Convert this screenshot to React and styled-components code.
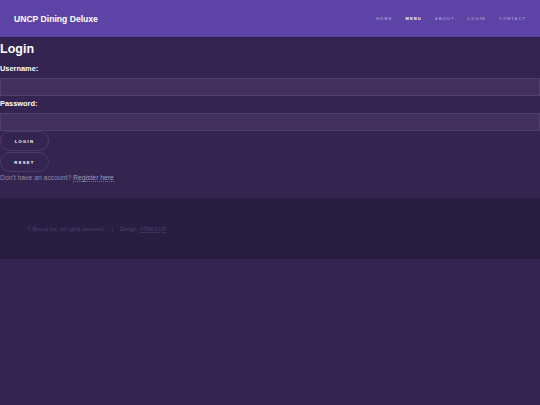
import React from "react";
import styled, { createGlobalStyle } from "styled-components";

const GlobalStyle = createGlobalStyle`
  html, body {
    margin: 0;
    padding: 0;
    background: #332550;
    font-family: "Liberation Sans", Arial, sans-serif;
  }
`;

const Header = styled.header`
  display: flex;
  align-items: center;
  justify-content: space-between;
  height: 37px;
  padding: 0 14px;
  background: #5d43a5;
  border-bottom: 1px solid #2c2046;
`;

const Title = styled.h1`
  margin: 0;
  font-size: 8.6px;
  font-weight: bold;
  color: #ffffff;
`;

const Nav = styled.nav`
  display: flex;
  gap: 13px;
`;

const NavLink = styled.a`
  font-size: 4px;
  font-weight: bold;
  letter-spacing: 0.28em;
  text-transform: uppercase;
  color: ${(props) => (props.$active ? "#ffffff" : "#a796d2")};
  text-decoration: none;
`;

const Main = styled.main`
  padding: 4px 0 17px;
  background: #332550;
`;

const Heading = styled.h2`
  margin: 0 0 8px;
  font-size: 12.5px;
  font-weight: bold;
  color: #ffffff;
`;

const Label = styled.label`
  display: block;
  margin-bottom: 5px;
  font-size: 7.4px;
  font-weight: bold;
  color: #ffffff;
`;

const Input = styled.input`
  display: block;
  box-sizing: border-box;
  width: 100%;
  height: 18px;
  margin: 0 0 3px;
  padding: 0 4px;
  background: #41305e;
  border: 1px solid #4f3e6e;
  color: #ffffff;
  outline: none;
`;

const PillButton = styled.button`
  display: block;
  box-sizing: border-box;
  width: 49px;
  height: 20px;
  margin: ${(props) => (props.$first ? "-3px 0 1px" : "0 0 2px")};
  padding: 0;
  background: transparent;
  border: 1px solid #4b3b6c;
  border-radius: 10px;
  color: #ffffff;
  font-family: "Liberation Sans", Arial, sans-serif;
  font-size: 4.2px;
  font-weight: bold;
  letter-spacing: 0.3em;
  text-transform: uppercase;
`;

const Note = styled.p`
  margin: 0;
  font-size: 6.8px;
  color: #938aae;

  a {
    color: #a39abd;
    text-decoration: none;
    border-bottom: 1px dotted #7c6ea0;
  }
`;

const Footer = styled.footer`
  display: flex;
  align-items: center;
  gap: 7px;
  height: 61px;
  padding: 0 27px;
  background: #271e42;
  font-size: 5.4px;
  color: #4d4270;

  a {
    color: #4d4270;
    text-decoration: none;
    border-bottom: 1px dotted #4d4270;
  }
`;

const Divider = styled.span`
  padding: 0;
`;

const navItems = ["Home", "Menu", "About", "Login", "Contact"];

const App = () => {
  return (
    <>
      <GlobalStyle />
      <Header>
        <Title>UNCP Dining Deluxe</Title>
        <Nav>
          {navItems.map((item) => (
            <NavLink key={item} href="#" $active={item === "Menu"}>
              {item}
            </NavLink>
          ))}
        </Nav>
      </Header>
      <Main>
        <Heading>Login</Heading>
        <form onSubmit={(e) => e.preventDefault()}>
          <Label htmlFor="username">Username:</Label>
          <Input id="username" type="text" />
          <Label htmlFor="password">Password:</Label>
          <Input id="password" type="password" />
          <PillButton type="submit" $first>
            Login
          </PillButton>
          <PillButton type="reset">Reset</PillButton>
        </form>
        <Note>
          Don't have an account? <a href="#">Register here</a>
        </Note>
      </Main>
      <Footer>
        <span>© Biscuit Inc. All rights reserved.</span>
        <Divider>|</Divider>
        <span>
          Design: <a href="#">HTML5 UP</a>
        </span>
      </Footer>
    </>
  );
};

export default App;
